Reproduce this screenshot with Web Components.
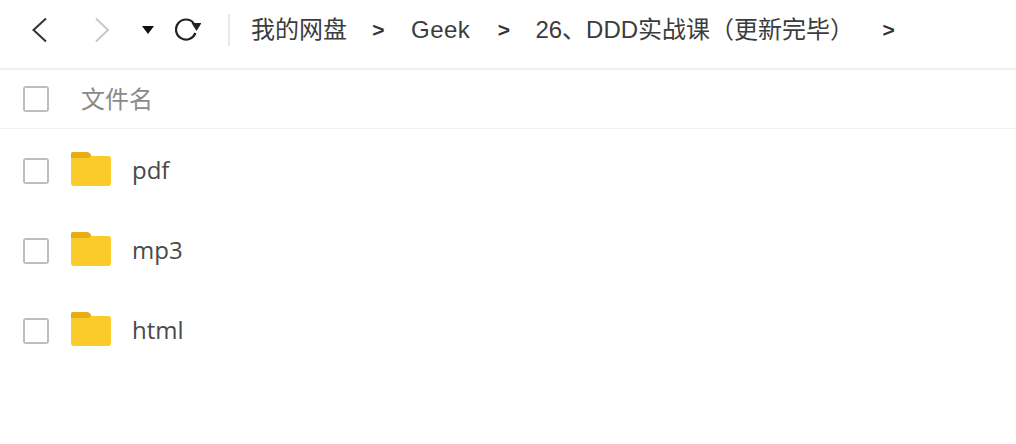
<!DOCTYPE html>
<html><head><meta charset="utf-8">
<style>html,body{margin:0;padding:0;background:#fff}body{width:1016px;height:444px;overflow:hidden;font-family:"Open Sans","Noto Sans CJK SC",sans-serif}</style>
</head><body>
<file-browser>
  <path-bar></path-bar>
  <list-header></list-header>
  <file-row name="pdf"></file-row>
  <file-row name="mp3"></file-row>
  <file-row name="html"></file-row>
</file-browser>
<script>
const FONT='"Liberation Sans","Noto Sans CJK SC",sans-serif';
class FileBrowser extends HTMLElement{constructor(){super();this.attachShadow({mode:'open'}).innerHTML=`<style>:host{display:block}::slotted(list-header){margin-bottom:2px}</style><slot></slot>`}}
class CheckBox extends HTMLElement{constructor(){super();this.attachShadow({mode:'open'}).innerHTML=`<style>:host{display:block;box-sizing:border-box;width:26px;height:26px;border:2px solid #bdbdbd;border-radius:3px;background:#fff}</style>`}}
class PathBar extends HTMLElement{constructor(){super();this.attachShadow({mode:'open'}).innerHTML=`<style>
:host{display:flex;align-items:center;box-sizing:border-box;height:70px;border-bottom:2px solid #f0f0f0;padding:0 0 8px 31px;font:24px/30px ${FONT};color:#3c3c3c;white-space:nowrap}
svg{display:block;flex:none}
.sep{width:2px;height:32px;background:#e8e8e8;margin:0 21px 0 27px;flex:none}
span{display:block;flex:none}
.c{font:bold 21px/30px "Liberation Sans",sans-serif;color:#333;width:13px;text-align:center}
</style>
<svg width="16" height="26" viewBox="0 0 16 26"><path d="M15 1.5 L2.5 13 L15 24.5" fill="none" stroke="#333" stroke-width="2"/></svg>
<svg width="16" height="26" viewBox="0 0 16 26" style="margin:0 0 0 47px"><path d="M2 1.5 L14 13 L2 24.5" fill="none" stroke="#c9c9c9" stroke-width="2"/></svg>
<svg width="12" height="8" viewBox="0 0 12 8" style="margin:0 0 0 32px"><path d="M0 0H12L6 8Z" fill="#111"/></svg>
<svg width="26" height="26" viewBox="0 0 26 26" style="margin:0 0 0 21px"><path d="M18.7 6.1A10 10 0 1 0 20.4 16" fill="none" stroke="#222" stroke-width="2.2"/><path d="M16.5 6H26.5L21.5 14Z" fill="#222"/></svg>
<div class="sep"></div>
<span style="width:96px">我的网盘</span>
<span class="c" style="margin:0 26px 0 25px">&gt;</span>
<span style="letter-spacing:.5px">Geek</span>
<span class="c" style="margin:0 25px 0 27px">&gt;</span>
<span>26、DDD实战课（更新完毕）</span>
<span class="c" style="margin-left:28px">&gt;</span>`}}
class ListHeader extends HTMLElement{constructor(){super();this.attachShadow({mode:'open'}).innerHTML=`<style>
:host{display:flex;align-items:center;box-sizing:border-box;height:59px;border-bottom:1px solid #f2f2f2;padding-left:23px;font:24px/30px ${FONT};color:#8a8a8a}
span{margin:2px 0 0 32px}</style><check-box></check-box><span>文件名</span>`}}
class FileRow extends HTMLElement{constructor(){super();this.attachShadow({mode:'open'}).innerHTML=`<style>
:host{display:flex;align-items:center;height:80px;padding-left:23px;font:24px/30px "Open Sans",sans-serif;color:#4a4a4a}
svg{display:block;margin:0 0 4px 22px}
span{margin:0 0 2px 21px}</style><check-box></check-box>
<svg width="40" height="34" viewBox="0 0 40 34"><path d="M2 0H16Q18 0 19 1.5L21 5V8H0V2Q0 0 2 0Z" fill="#e6ad10"/><path d="M0 6H18L20 4H37Q40 4 40 7V31Q40 34 37 34H3Q0 34 0 31Z" fill="#fbcb2b"/></svg>
<span>${this.getAttribute('name')}</span>`}}
customElements.define('file-browser',FileBrowser);
customElements.define('check-box',CheckBox);
customElements.define('path-bar',PathBar);
customElements.define('list-header',ListHeader);
customElements.define('file-row',FileRow);
</script>
</body></html>
